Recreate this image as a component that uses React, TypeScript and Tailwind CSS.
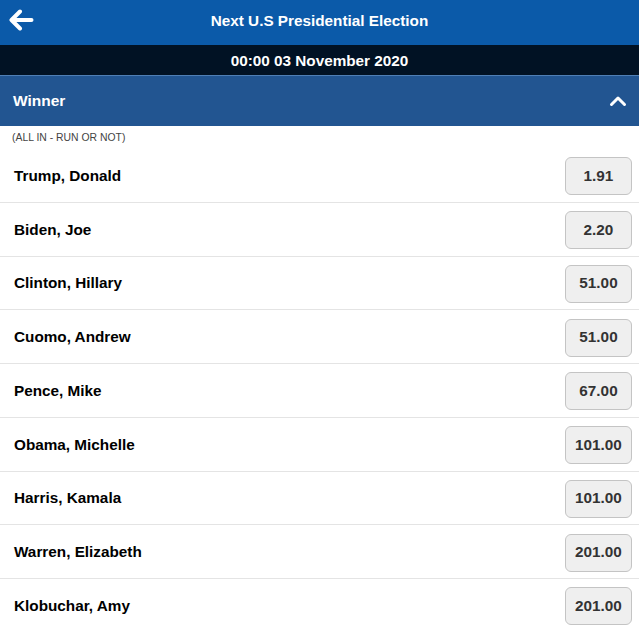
import React from "react";

const runners: { name: string; price: string }[] = [
  { name: "Trump, Donald", price: "1.91" },
  { name: "Biden, Joe", price: "2.20" },
  { name: "Clinton, Hillary", price: "51.00" },
  { name: "Cuomo, Andrew", price: "51.00" },
  { name: "Pence, Mike", price: "67.00" },
  { name: "Obama, Michelle", price: "101.00" },
  { name: "Harris, Kamala", price: "101.00" },
  { name: "Warren, Elizabeth", price: "201.00" },
  { name: "Klobuchar, Amy", price: "201.00" },
];

const App: React.FC = () => {
  return (
    <div className="h-[629px] w-full overflow-hidden bg-white font-['Liberation_Sans',Arial,sans-serif]">
      <header className="relative flex h-[45px] items-center justify-center bg-[#0b5aa9] pb-[2px]">
        <button className="absolute left-[9px] top-[9px] text-white">
          <svg width="25" height="22" viewBox="0 0 25 22" fill="none">
            <path
              d="M11 2.5 L2.5 11 L11 19.5 M3 11 H22.5"
              stroke="white"
              strokeWidth="4"
              strokeLinecap="round"
              strokeLinejoin="round"
            />
          </svg>
        </button>
        <h1 className="text-[15.3px] font-bold text-white">
          Next U.S Presidential Election
        </h1>
      </header>

      <div className="flex h-[30px] items-center justify-center bg-[#011224] pt-[2px] text-[15.3px] font-bold text-white">
        00:00 03 November 2020
      </div>

      <div className="flex h-[51px] items-center justify-between border-t border-[#4f7fb5] bg-[#225591] pl-[13px] pr-[12px]">
        <span className="text-[15.5px] font-bold text-white">Winner</span>
        <svg width="18" height="12" viewBox="0 0 18 12" fill="none">
          <path
            d="M2.5 9.5 L9 3 L15.5 9.5"
            stroke="white"
            strokeWidth="3"
            strokeLinecap="round"
            strokeLinejoin="round"
          />
        </svg>
      </div>

      <p className="px-[12px] pt-[6px] text-[10.4px] leading-[12px] text-[#444]">
        (ALL IN - RUN OR NOT)
      </p>

      <ul className="mt-[5px]">
        {runners.map((r) => (
          <li
            key={r.name}
            className="flex h-[53.75px] items-center justify-between border-b border-[#e4e4e4] pl-[14px] pr-[7px] pt-[2px]"
          >
            <span className="text-[15.3px] font-bold text-black">{r.name}</span>
            <button className="flex h-[38px] w-[67px] items-center justify-center rounded-[6px] border border-[#c4c4c4] bg-[#efefef] text-[15.3px] font-bold text-[#333]">
              {r.price}
            </button>
          </li>
        ))}
      </ul>
    </div>
  );
};

export default App;
